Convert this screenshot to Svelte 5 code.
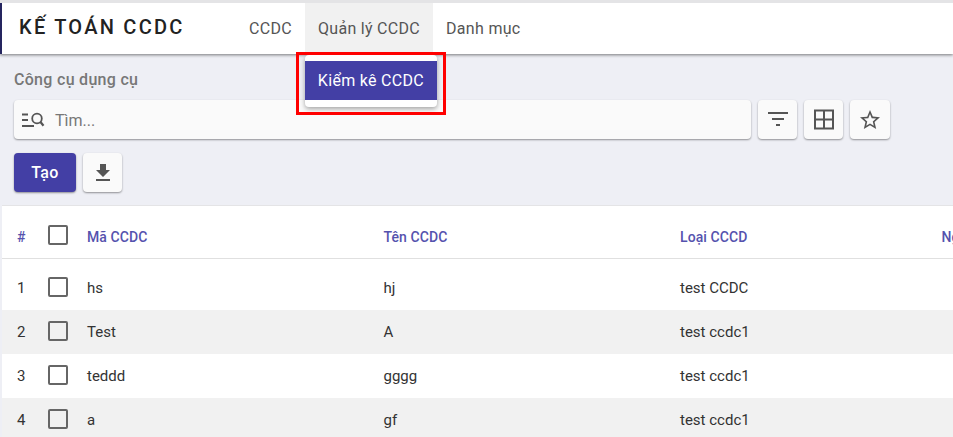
<script>
  const rows = [
    { no: 1, code: 'hs', name: 'hj', type: 'test CCDC' },
    { no: 2, code: 'Test', name: 'A', type: 'test ccdc1' },
    { no: 3, code: 'teddd', name: 'gggg', type: 'test ccdc1' },
    { no: 4, code: 'a', name: 'gf', type: 'test ccdc1' }
  ];
</script>

<div class="page">
  <header class="navbar">
    <div class="brand">KẾ TOÁN CCDC</div>
    <nav class="menu">
      <div class="menu-item">CCDC</div>
      <div class="menu-item active">
        Quản lý CCDC
        <div class="dropdown">
          <div class="dropdown-item">Kiểm kê CCDC</div>
        </div>
        <div class="highlight"></div>
      </div>
      <div class="menu-item">Danh mục</div>
    </nav>
  </header>

  <main class="content">
    <div class="page-title">Công cụ dụng cụ</div>

    <div class="search-row">
      <div class="search card">
        <svg class="search-icon" width="24" height="24" viewBox="0 0 24 24" fill="none" stroke="#555" stroke-width="1.8">
          <path d="M1 6.5h6M1 12h6M1 18h12" />
          <circle cx="16" cy="10.5" r="4.8" />
          <path d="M19.5 14l3 3.8" stroke-width="2.2" />
        </svg>
        <span class="placeholder">Tìm...</span>
      </div>
      <button class="icon-btn card" aria-label="Lọc">
        <svg width="24" height="24" viewBox="0 0 24 24" fill="#555"><path d="M2 4h20v2H2zM6 10h12v2H6zM10 16h4v2h-4z" /></svg>
      </button>
      <button class="icon-btn card" aria-label="Bảng">
        <svg width="24" height="24" viewBox="0 0 24 24" fill="none" stroke="#555" stroke-width="2"><path d="M3 2.5h18v18H3zM12 2.5v18M3 11.5h18" /></svg>
      </button>
      <button class="icon-btn card star" aria-label="Yêu thích">
        <svg width="24" height="24" viewBox="0 0 24 24" fill="#555"><path d="M22 9.24l-7.19-.62L12 2 9.19 8.63 2 9.24l5.46 4.73L5.82 21 12 17.27 18.18 21l-1.63-7.03L22 9.24zM12 15.4l-3.76 2.27 1-4.28-3.32-2.88 4.38-.38L12 6.1l1.71 4.04 4.38.38-3.32 2.88 1 4.28L12 15.4z" /></svg>
      </button>
    </div>

    <div class="action-row">
      <button class="primary">Tạo</button>
      <button class="icon-btn card" aria-label="Tải xuống">
        <svg width="24" height="24" viewBox="0 0 24 24" fill="#555"><path d="M19 9h-4V3H9v6H5l7 7 7-7zM5 18v2h14v-2H5z" /></svg>
      </button>
    </div>
  </main>

  <section class="table">
    <div class="row head">
      <div class="c-no">#</div>
      <div class="c-check"><span class="box"></span></div>
      <div class="c-col">Mã CCDC</div>
      <div class="c-col">Tên CCDC</div>
      <div class="c-col">Loại CCCD</div>
      <div class="c-last">Ngày</div>
    </div>
    {#each rows as r, i}
      <div class="row" class:first={i === 0} class:odd={i % 2 === 1}>
        <div class="c-no">{r.no}</div>
        <div class="c-check"><span class="box"></span></div>
        <div class="c-col">{r.code}</div>
        <div class="c-col">{r.name}</div>
        <div class="c-col">{r.type}</div>
      </div>
    {/each}
  </section>
</div>

<style>
  :global(body) {
    margin: 0;
    background: #eeeff5;
    overflow: hidden;
  }

  .page {
    width: 953px;
    height: 437px;
    overflow: hidden;
    font-family: Roboto, "Liberation Sans", sans-serif;
    color: #333;
    background: #eeeff5;
    border-top: 3px solid #e4e4e6;
    box-sizing: border-box;
  }

  .navbar {
    display: flex;
    align-items: stretch;
    height: 51px;
    background: #fff;
    border-left: 2px solid #25255f;
    box-shadow: 0 1px 3px rgba(0, 0, 0, 0.5);
    position: relative;
    z-index: 2;
  }

  .brand {
    width: 234px;
    padding-left: 17px;
    box-sizing: border-box;
    font-size: 20px;
    font-weight: 500;
    letter-spacing: 2.25px;
    line-height: 48px;
    color: #222;
    white-space: nowrap;
  }

  .menu {
    display: flex;
  }

  .menu-item {
    position: relative;
    padding: 0 13px;
    font-size: 16px;
    letter-spacing: 0.3px;
    line-height: 51px;
    color: #555;
    white-space: nowrap;
  }

  .menu-item.active {
    background: #f1f1f1;
  }

  .dropdown {
    position: absolute;
    left: 0;
    top: 52px;
    width: 132px;
    height: 52px;
    padding-top: 6px;
    box-sizing: border-box;
    background: #fff;
    border-radius: 4px;
    box-shadow: 0 2px 5px rgba(0, 0, 0, 0.35);
  }

  .dropdown-item {
    height: 39px;
    line-height: 39px;
    text-align: center;
    color: #fff;
    background: #433fa5;
  }

  .highlight {
    position: absolute;
    left: -9px;
    top: 49px;
    width: 150px;
    height: 63px;
    box-sizing: border-box;
    border: 3px solid #f00;
  }

  .content {
    padding: 0 14px;
  }

  .page-title {
    padding-top: 17px;
    font-size: 16px;
    font-weight: 500;
    letter-spacing: 0.3px;
    line-height: 18px;
    color: #777;
  }

  .search-row {
    display: flex;
    gap: 7px;
    margin-top: 11px;
  }

  .card {
    background: #fafafa;
    border-radius: 4px;
    box-shadow: 0 1px 2px rgba(0, 0, 0, 0.4);
  }

  .search {
    display: flex;
    align-items: center;
    width: 737px;
    height: 39px;
    padding-left: 7px;
    box-sizing: border-box;
  }

  .search-icon {
    width: 24px;
    height: 24px;
  }

  .placeholder {
    margin-left: 10px;
    font-size: 16px;
    padding-top: 1px;
    color: #777;
  }

  .icon-btn {
    display: flex;
    align-items: center;
    justify-content: center;
    width: 39px;
    height: 39px;
    padding: 0;
    border: none;
  }

  .icon-btn.star {
    width: 40px;
  }

  .action-row {
    display: flex;
    gap: 7px;
    margin-top: 14px;
  }

  .primary {
    width: 62px;
    height: 39px;
    padding: 0;
    border: none;
    border-radius: 4px;
    background: #433fa5;
    color: #fff;
    font-family: inherit;
    font-size: 16px;
    font-weight: 500;
    letter-spacing: 0.4px;
    box-shadow: 0 1px 2px rgba(0, 0, 0, 0.4);
  }

  .table {
    margin: 13px 0 0 2px;
    background: #fff;
    border-top: 1px solid #e4e4e6;
    font-size: 15px;
  }

  .row {
    display: flex;
    align-items: center;
    height: 44px;
    white-space: nowrap;
  }

  .row > div {
    flex: none;
  }

  .row.first {
    height: 51px;
    padding-top: 7px;
    box-sizing: border-box;
  }

  .row.odd {
    background: #f1f1f1;
  }

  .row.head {
    height: 53px;
    padding-top: 9px;
    box-sizing: border-box;
    border-bottom: 1px solid #e0e0e0;
    font-size: 14px;
    font-weight: 500;
    letter-spacing: 0.1px;
    color: #5552ae;
  }

  .c-no {
    width: 46px;
    padding-left: 15px;
    box-sizing: border-box;
  }

  .c-check {
    display: flex;
    width: 39px;
  }

  .box {
    width: 20px;
    height: 20px;
    margin-bottom: 3px;
    box-sizing: border-box;
    border: 2px solid #666;
    border-radius: 2px;
  }

  .c-col {
    width: 296.5px;
  }

  .c-last {
    width: 40px;
    margin-left: -35px;
  }
</style>
